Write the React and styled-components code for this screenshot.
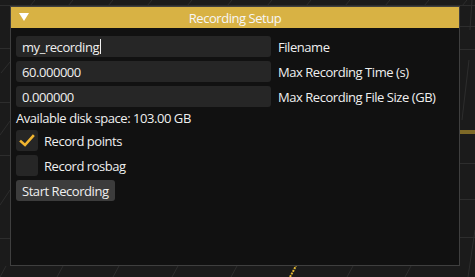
import styled, { createGlobalStyle } from "styled-components";

const GlobalStyle = createGlobalStyle`
  html, body {
    margin: 0;
    padding: 0;
    background: #1b1b1b;
    overflow: hidden;
  }
  body {
    font-family: "Open Sans", "Noto Sans", sans-serif;
    font-weight: 500;
    letter-spacing: -0.45px;
  }
`;

const Viewport = styled.div`
  position: relative;
  width: 475px;
  height: 277px;
  overflow: hidden;
  background: #1b1b1b;
`;

const GridLayer = styled.svg`
  position: absolute;
  left: 0;
  top: 0;
`;

const Window = styled.div`
  position: relative;
  margin: 6px 0 0 10px;
  width: 448px;
  height: 258px;
  border: 1px solid #3f3f3f;
  background: #111111;
  display: flex;
  flex-direction: column;
`;

const TitleBar = styled.div`
  height: 21px;
  background: #d8b244;
  display: flex;
  align-items: center;
  position: relative;
  color: #f6f6f6;
  font-size: 13px;
  justify-content: center;
`;

const Arrow = styled.span`
  position: absolute;
  left: 8px;
  top: 6px;
  width: 0;
  height: 0;
  border-left: 5px solid transparent;
  border-right: 5px solid transparent;
  border-top: 8px solid #ffffff;
`;

const Content = styled.div`
  padding: 8px 5px 0 5px;
  display: flex;
  flex-direction: column;
  gap: 4px;
`;

const Row = styled.div`
  display: flex;
  align-items: center;
  gap: 7px;
  height: 21px;
`;

const Field = styled.div`
  width: 255px;
  height: 21px;
  background: #262626;
  border-radius: 3px;
  box-sizing: border-box;
  padding-left: 6px;
  display: flex;
  align-items: center;
  color: #efefef;
  font-size: 13px;
`;

const Caret = styled.span`
  display: inline-block;
  width: 1px;
  height: 15px;
  background: #f0f0f0;
  margin-left: 1px;
`;

const Label = styled.span`
  color: #efefef;
  font-size: 13px;
  white-space: nowrap;
`;

const InfoText = styled.div`
  height: 15px;
  line-height: 15px;
  color: #efefef;
  font-size: 13px;
  white-space: nowrap;
`;

const CheckRow = styled.div`
  display: flex;
  align-items: center;
  gap: 6px;
  height: 21px;
`;

const CheckBox = styled.div`
  width: 22px;
  height: 21px;
  background: #262626;
  border-radius: 3px;
  display: flex;
  align-items: center;
  justify-content: center;
`;

const Button = styled.div`
  align-self: flex-start;
  height: 21px;
  padding: 0 6px;
  background: #3c3c3c;
  border-radius: 3px;
  display: flex;
  align-items: center;
  color: #efefef;
  font-size: 13px;
  white-space: nowrap;
`;

const fields = [
  { value: "my_recording", label: "Filename", caret: true },
  { value: "60.000000", label: "Max Recording Time (s)" },
  { value: "0.000000", label: "Max Recording File Size (GB)" },
];

const checks = [
  { label: "Record points", checked: true },
  { label: "Record rosbag", checked: false },
];

function Grid() {
  const line = "#2d2d2d";
  const tops = [35, 73, 113, 152, 192, 232, 272, 311, 350, 390, 429, 467];
  const bottoms = [5, 62, 118, 177, 236, 352, 410];
  return (
    <GridLayer width="475" height="277">
      <rect width="475" height="277" fill="#1b1b1b" />
      <line x1="0" y1="5.5" x2="475" y2="5.5" stroke={line} />
      {[48.5, 102.5, 155.5, 238.5].map((y) => (
        <line key={"l" + y} x1="0" y1={y} x2="10" y2={y} stroke={line} />
      ))}
      {[26.5, 49.5, 163.5, 199.5, 237.5].map((y) => (
        <line key={"r" + y} x1="459" y1={y} x2="475" y2={y} stroke={line} />
      ))}
      <line x1="459" y1="131" x2="475" y2="131" stroke="#e3b934" />
      <line x1="459" y1="133" x2="475" y2="133" stroke="#e3b934" />
      {tops.map((x) => (
        <line key={"t" + x} x1={x - 5} y1="6" x2={x} y2="0" stroke={line} />
      ))}
      {bottoms.map((x) => (
        <line key={"b" + x} x1={x - 5} y1="277" x2={x + 1} y2="266" stroke={line} />
      ))}
      <line x1="1" y1="73" x2="10" y2="62" stroke={line} />
      <line x1="0" y1="135" x2="10" y2="121" stroke={line} />
      <line x1="0" y1="205" x2="10" y2="190" stroke={line} />
      <line x1="468" y1="277" x2="475" y2="230" stroke={line} />
      <line x1="462" y1="120" x2="469" y2="60" stroke={line} />
      <line x1="470" y1="30" x2="472" y2="0" stroke={line} />
      <line x1="290" y1="277" x2="296" y2="266" stroke="#e3b934" strokeWidth="2" strokeDasharray="2 1" />
    </GridLayer>
  );
}

function Check() {
  return (
    <svg width="16" height="14" viewBox="0 0 16 14">
      <path d="M2 7.5 L6 11 L14 2" fill="none" stroke="#f2b630" strokeWidth="2.6" strokeLinecap="square" />
    </svg>
  );
}

export default function App() {
  return (
    <Viewport>
      <GlobalStyle />
      <Grid />
      <Window>
        <TitleBar>
          <Arrow />
          Recording Setup
        </TitleBar>
        <Content>
          {fields.map((f) => (
            <Row key={f.label}>
              <Field>
                {f.value}
                {f.caret && <Caret />}
              </Field>
              <Label>{f.label}</Label>
            </Row>
          ))}
          <InfoText>Available disk space: 103.00 GB</InfoText>
          {checks.map((c) => (
            <CheckRow key={c.label}>
              <CheckBox>{c.checked && <Check />}</CheckBox>
              <Label>{c.label}</Label>
            </CheckRow>
          ))}
          <Button>Start Recording</Button>
        </Content>
      </Window>
    </Viewport>
  );
}
